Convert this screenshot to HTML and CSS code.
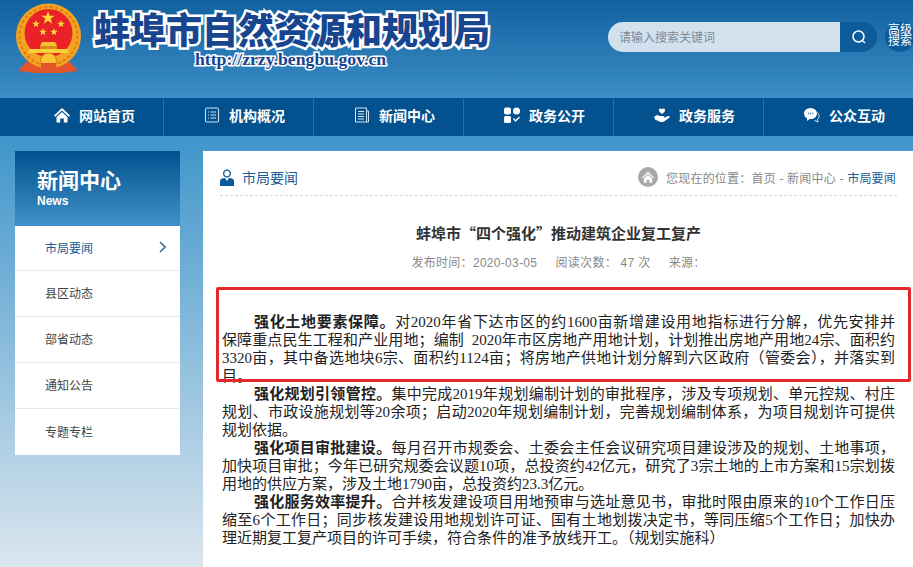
FILE: index.html
```html
<!DOCTYPE html>
<html lang="zh-CN">
<head>
  <meta charset="UTF-8" />
  <meta name="viewport" content="width=device-width, initial-scale=1.0"/>
  <title>蚌埠市自然资源和规划局</title>
  <link rel="stylesheet" href="styles.css">
</head>
<body>
  <svg class="defs" width="0" height="0">
    <symbol id="star" viewBox="-10 -10 20 20">
      <polygon points="0,-10 2.35,-3.24 9.51,-3.09 3.8,1.24 5.88,8.09 0,4 -5.88,8.09 -3.8,1.24 -9.51,-3.09 -2.35,-3.24"/>
    </symbol>
  </svg>

  <header class="top">
    <!-- national emblem -->
    <svg class="emblem" width="66" height="71" viewBox="16 3 66 71">
      <path d="M26 62 L18 71 L36 73 L60 73 L78 71 L70 62 Z" fill="#e2552a"/>
      <circle cx="48.500" cy="36" r="32.500" fill="#f2a31f"/>
      <circle cx="48.500" cy="36" r="29" fill="none" stroke="#e07b1a" stroke-width="2" stroke-dasharray="3 2.500"/>
      <circle cx="48.500" cy="33" r="24" fill="#ea2127"/>
      <g fill="#ffdc3c">
        <use href="#star" x="41" y="11" width="14" height="14"/>
        <use href="#star" x="32" y="20" width="8" height="8"/>
        <use href="#star" x="57" y="20" width="8" height="8"/>
        <use href="#star" x="39" y="28" width="8" height="8"/>
        <use href="#star" x="50" y="28" width="8" height="8"/>
      </g>
      <path d="M42 42 H55 L57 46 H40 Z" fill="#f5c02e"/>
      <rect x="40" y="46" width="17" height="3" fill="#d98a1c"/>
      <path d="M30 49 H67 L69 53 H28 Z" fill="#fbd23a"/>
      <circle cx="48.500" cy="61" r="8" fill="#fbc531" stroke="#d9771a"/>
      <path d="M41 63 H56 V69 H41 Z" fill="#e2552a"/>
    </svg>
    <div class="brand">
      <div class="brand-name">蚌埠市自然资源和规划局</div>
      <div class="brand-url">http://zrzy.bengbu.gov.cn</div>
    </div>
    <div class="search">
      <div class="search-input">请输入搜索关键词</div>
      <div class="search-btn">
        <svg width="16" height="16" viewBox="0 0 16 16" fill="none" stroke="#fff" stroke-width="1.500">
          <circle cx="7.500" cy="7.500" r="5.500"/>
          <path d="M12 12 L14 14"/>
        </svg>
      </div>
      <div class="search-adv">高级<br>搜索</div>
    </div>
  </header>

  <nav class="nav">
    <a class="nav-item">
      <svg width="16" height="16" viewBox="0 0 16 16" fill="#fff">
        <path d="M8 1 L16 8.500 L14.800 9.700 L8 3.400 L1.200 9.700 L0 8.500 Z"/>
        <path d="M8 5 L13.500 10 V15.500 H9.800 V11.500 H6.200 V15.500 H2.500 V10 Z"/>
      </svg>
      网站首页
    </a>
    <a class="nav-item">
      <svg width="16" height="16" viewBox="0 0 16 16" fill="none" stroke="#d5e6f3" stroke-width="1">
        <rect x="1.500" y="1" width="13" height="14" rx="1"/>
        <path d="M4 5 H5 M6.500 5 H12 M4 8 H5 M6.500 8 H12 M4 11 H5 M6.500 11 H12"/>
      </svg>
      机构概况
    </a>
    <a class="nav-item">
      <svg width="16" height="16" viewBox="0 0 16 16" fill="none" stroke="#d5e6f3" stroke-width="1">
        <path d="M1.500 1 H12.500 V15 H1.500 Z M12.500 4 H14.500 V15 H12.500"/>
        <path d="M4 4.500 H10 M4 7 H10 M4 9.500 H10 M4 12 H10"/>
      </svg>
      新闻中心
    </a>
    <a class="nav-item">
      <svg width="16" height="16" viewBox="0 0 16 16" fill="#fff">
        <rect x="0" y="0.500" width="7" height="7" rx="2"/>
        <rect x="9" y="0.500" width="7" height="7" rx="3.500"/>
        <rect x="0" y="9" width="7" height="7" rx="1.500"/>
        <path d="M9.500 11.500 L11.500 14 L15.500 10" fill="none" stroke="#fff" stroke-width="1.300"/>
      </svg>
      政务公开
    </a>
    <a class="nav-item">
      <svg width="16" height="16" viewBox="0 0 16 16" fill="#fff">
        <path d="M8 7 C5 4.800 4.600 3.600 5 2.500 C5.500 1.200 7.300 1 8 2.300 C8.700 1 10.500 1.200 11 2.500 C11.400 3.600 11 4.800 8 7 Z"/>
        <path d="M0 10 C2 8 4 8 6 9 H9.500 C10.500 9 10.500 10.800 9.500 10.800 H7 H10 L14 9 C15.500 8.500 16.500 10 15 11 L10 14.500 C8 15.500 5 15 3.500 13.500 L1.500 13 Z"/>
      </svg>
      政务服务
    </a>
    <a class="nav-item">
      <svg width="16" height="16" viewBox="0 0 16 16">
        <ellipse cx="6.500" cy="6.500" rx="6.500" ry="5.500" fill="#fff"/>
        <path d="M3 10 L3 14 L7 11 Z" fill="#fff"/>
        <path d="M4 6.500 H4.800 M6.200 6.500 H7 M8.400 6.500 H9.200" stroke="#03518f" stroke-width="1.300"/>
        <path d="M13.500 5.500 C15.800 8 15.500 11 13.500 12.500 L14 15 L10.500 13.500" fill="none" stroke="#d5e6f3"/>
      </svg>
      公众互动
    </a>
  </nav>

  <div class="page">
    <aside class="side">
      <div class="side-head">
        <div class="side-title">新闻中心</div>
        <div class="side-sub">News</div>
      </div>
      <ul class="side-menu">
        <li class="active">市局要闻
          <svg width="7" height="12" viewBox="0 0 7 12" fill="none" stroke="#3f6f95" stroke-width="1.600">
            <path d="M1 1 L6 6 L1 11"/>
          </svg>
        </li>
        <li>县区动态</li>
        <li>部省动态</li>
        <li>通知公告</li>
        <li>专题专栏</li>
      </ul>
    </aside>

    <main class="main">
      <div class="crumbs">
        <div class="crumbs-title">
          <svg width="14" height="17" viewBox="0 0 14 17" fill="#0d5a98">
            <path d="M7 0.500 C9.500 0.500 11 2.300 11 4.500 C11 6.700 9.500 8.500 7 8.500 C4.500 8.500 3 6.700 3 4.500 C3 2.300 4.500 0.500 7 0.500 Z M7 1.800 C5.300 1.800 4.300 3 4.300 4.500 C4.300 6 5.300 7.200 7 7.200 C8.700 7.200 9.700 6 9.700 4.500 C9.700 3 8.700 1.800 7 1.800 Z"/>
            <path d="M0 17 V12 C0 10 2 9 5 9 L7 12 L9 9 C12 9 14 10 14 12 V17 Z"/>
          </svg>
          市局要闻
        </div>
        <div class="crumbs-path">
          <span class="crumbs-home">
            <svg width="12" height="12" viewBox="0 0 16 16" fill="#fff">
              <path d="M8 1 L16 8.500 L14.800 9.700 L8 3.400 L1.200 9.700 L0 8.500 Z"/>
              <path d="M8 5 L13.500 10 V15.500 H9.800 V11.500 H6.200 V15.500 H2.500 V10 Z"/>
            </svg>
          </span>
          <span>您现在的位置：首页 - 新闻中心 - <span class="crumbs-here">市局要闻</span></span>
        </div>
      </div>

      <h1 class="title">蚌埠市“四个强化”推动建筑企业复工复产</h1>
      <div class="meta">发布时间：2020-03-05 &nbsp;&nbsp;&nbsp; 阅读次数： 47 次 &nbsp;&nbsp;&nbsp; 来源：</div>

      <article class="article">
        <p>
          <span class="ln first"><strong>强化土地要素保障。</strong>对2020年省下达市区的约1600亩新增建设用地指标进行分解，优先安排并</span>
          <span class="ln">保障重点民生工程和产业用地；编制&nbsp;&nbsp;2020年市区房地产用地计划，计划推出房地产用地24宗、面积约</span>
          <span class="ln">3320亩，其中备选地块6宗、面积约1124亩；将房地产供地计划分解到六区政府（管委会），并落实到</span>
          <span class="ln end">目。</span>
        </p>
        <p>
          <span class="ln first"><strong>强化规划引领管控。</strong>集中完成2019年规划编制计划的审批程序，涉及专项规划、单元控规、村庄</span>
          <span class="ln">规划、市政设施规划等20余项；启动2020年规划编制计划，完善规划编制体系，为项目规划许可提供</span>
          <span class="ln end">规划依据。</span>
        </p>
        <p>
          <span class="ln first"><strong>强化项目审批建设。</strong>每月召开市规委会、土委会主任会议研究项目建设涉及的规划、土地事项，</span>
          <span class="ln">加快项目审批；今年已研究规委会议题10项，总投资约42亿元，研究了3宗土地的上市方案和15宗划拨</span>
          <span class="ln end">用地的供应方案，涉及土地1790亩，总投资约23.3亿元。</span>
        </p>
        <p>
          <span class="ln first"><strong>强化服务效率提升。</strong>合并核发建设项目用地预审与选址意见书，审批时限由原来的10个工作日压</span>
          <span class="ln">缩至6个工作日；同步核发建设用地规划许可证、国有土地划拨决定书，等同压缩5个工作日；加快办</span>
          <span class="ln end">理近期复工复产项目的许可手续，符合条件的准予放线开工。（规划实施科）</span>
        </p>
      </article>

      <div class="mark"></div>
    </main>
  </div>
</body>
</html>
```

FILE: styles.css
```css
* {
  box-sizing: border-box;
}

html,
body {
  margin: 0;
  padding: 0;
  height: 100%;
  overflow: hidden;
}

body {
  font-family: "Liberation Sans", "Noto Sans CJK SC", sans-serif;
  color: #333;
  display: flex;
  flex-direction: column;
}

.defs {
  position: absolute;
}

/* top banner */
.top {
  height: 98px;
  flex: none;
  display: flex;
  background: linear-gradient(#11619f, #3c8ec6);
}

.emblem {
  flex: none;
  margin: 3px 0 0 16px;
}

.brand {
  flex: none;
  width: 396px;
  margin-left: 12px;
}

.brand-name {
  font-family: "Noto Sans CJK SC", sans-serif;
  font-size: 36px;
  font-weight: 900;
  line-height: 38px;
  margin-top: 9px;
  white-space: nowrap;
  color: #17458f;
  -webkit-text-stroke: 5px #fff;
  paint-order: stroke fill;
}

.brand-url {
  font-family: "Liberation Serif", serif;
  font-size: 17.700px;
  font-weight: bold;
  line-height: 20px;
  margin: 2px 0 0 101px;
  white-space: nowrap;
  color: #17458f;
  -webkit-text-stroke: 3px #fff;
  paint-order: stroke fill;
}

.search {
  flex: none;
  display: flex;
  height: 30px;
  margin: 22px 0 0 118px;
}

.search-input {
  width: 232px;
  padding-left: 11px;
  font-size: 12px;
  line-height: 32px;
  color: #808a94;
  background: #d2e1ee;
  border-radius: 15px 0 0 15px;
}

.search-btn {
  width: 37px;
  display: flex;
  align-items: center;
  justify-content: center;
  background: #0e5b99;
  border-radius: 0 15px 15px 0;
}

.search-adv {
  flex: none;
  width: 30px;
  height: 30px;
  margin-left: 8px;
  padding-top: 3px;
  font-size: 12px;
  line-height: 11px;
  text-align: center;
  color: #fff;
  background: #0e5b99;
  border-radius: 50%;
}

/* main menu */
.nav {
  height: 38px;
  flex: none;
  display: flex;
  padding-left: 14px;
  background: #03518f;
}

.nav-item {
  width: 150px;
  flex: none;
  display: flex;
  align-items: center;
  gap: 9px;
  padding: 0 0 4px 40px;
  font-size: 14px;
  font-weight: bold;
  color: #fff;
  border-right: 1px solid #2a70a8;
}

.nav-item:last-child {
  border-right: none;
}

.nav-item svg {
  flex: none;
}

/* below the menu */
.page {
  flex: 1;
  display: flex;
  align-items: flex-start;
  gap: 23px;
  padding: 15px 0 0 15px;
  background: linear-gradient(#3f95cb, #dbe6ee);
}

.side {
  width: 165px;
  flex: none;
}

.side-head {
  height: 75px;
  padding: 16px 0 0 22px;
  color: #fff;
  background: linear-gradient(#03518f, #3f92c8);
}

.side-title {
  font-size: 21px;
  font-weight: bold;
  line-height: 28px;
}

.side-sub {
  font-size: 12px;
  font-weight: bold;
  line-height: 13px;
}

.side-menu {
  list-style: none;
  margin: 0;
  padding: 0;
  background: #fff;
}

.side-menu li {
  height: 46px;
  display: flex;
  align-items: center;
  justify-content: space-between;
  padding: 0 14px 2px 30px;
  font-size: 12px;
  color: #444;
  border-bottom: 1px solid #e6e9ec;
}

.side-menu li:first-child {
  height: 45px;
}

.side-menu li:last-child {
  border-bottom: none;
}

.side-menu .active {
  color: #1b5c94;
}

.main {
  position: relative;
  flex: 1;
  align-self: stretch;
  padding: 0 16px 0 17px;
  background: #fff;
}

.crumbs {
  height: 45px;
  display: flex;
  align-items: center;
  justify-content: space-between;
  padding-top: 8px;
  border-bottom: 1px dashed #d6d6d6;
}

.crumbs-title {
  display: flex;
  align-items: center;
  gap: 8px;
  font-size: 14px;
  color: #1b5c94;
}

.crumbs-path {
  display: flex;
  align-items: center;
  padding-right: 1px;
  font-size: 12px;
  letter-spacing: 0.2px;
  color: #888;
}

.crumbs-home {
  width: 20px;
  height: 20px;
  display: flex;
  align-items: center;
  justify-content: center;
  margin-right: 8px;
  background: #a8a8a8;
  border-radius: 50%;
}

.crumbs-here {
  color: #1b5c94;
}

.title {
  margin: 27px 0 0;
  font-family: "Noto Sans CJK SC", sans-serif;
  font-size: 15px;
  font-weight: bold;
  line-height: 20px;
  text-align: center;
  color: #333;
}

.meta {
  margin-top: 10px;
  font-size: 12px;
  letter-spacing: 0.3px;
  line-height: 20px;
  text-align: center;
  color: #888;
}

.article {
  margin-top: 40px;
  padding: 0 2px;
}

.article p {
  margin: 0;
  font-family: "Liberation Serif", "Noto Sans CJK SC", serif;
  font-size: 15px;
  line-height: 18px;
  color: #222;
}

/* each line is set by hand so the breaks stay where the original has them */
.ln {
  display: block;
  white-space: nowrap;
  text-align: justify;
  text-align-last: justify;
}

.first {
  text-indent: 32px;
}

.end {
  text-align-last: left;
}

/* red annotation drawn over the first paragraph */
.mark {
  position: absolute;
  left: 13px;
  top: 136px;
  width: 695px;
  height: 95px;
  border: 3px solid #e3262a;
  border-radius: 2px;
}
```
